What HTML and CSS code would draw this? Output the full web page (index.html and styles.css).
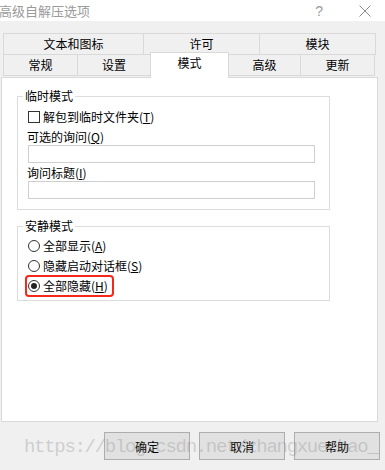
FILE: index.html
```html
<!DOCTYPE html>
<html lang="zh-CN">
<head>
  <meta charset="UTF-8" />
  <title>高级自解压选项</title>
  <link rel="stylesheet" href="styles.css">
</head>
<body>

  <div class="titlebar">
    <div class="title">高级自解压选项</div>
    <div class="title-help">?</div>
    <svg class="title-close" width="14" height="12" viewBox="0 0 14 12">
      <path d="M1.5 0.5 L12.5 11.5 M12.5 0.5 L1.5 11.5" stroke="#8a8a8a" stroke-width="1" fill="none"/>
    </svg>
  </div>

  <div class="tabs">
    <div class="tab-row">
      <div class="tab" style="width: 141px;">文本和图标</div>
      <div class="tab" style="width: 117px;">许可</div>
      <div class="tab" style="width: 117px;">模块</div>
    </div>
    <div class="tab-row">
      <div class="tab" style="width: 75px;">常规</div>
      <div class="tab" style="width: 74px;">设置</div>
      <div class="tab active" style="width: 79px;">模式</div>
      <div class="tab" style="width: 73px;">高级</div>
      <div class="tab" style="width: 75px;">更新</div>
    </div>
  </div>

  <div class="panel">
    <fieldset class="group">
      <legend>临时模式</legend>
      <div class="row check-row">
        <span class="checkbox"></span>
        <span>解包到临时文件夹(<u>T</u>)</span>
      </div>
      <div class="row field-label">可选的询问(<u>Q</u>)</div>
      <div class="field"></div>
      <div class="row field-label second">询问标题(<u>I</u>)</div>
      <div class="field"></div>
    </fieldset>

    <fieldset class="group quiet">
      <legend>安静模式</legend>
      <div class="row radio-row">
        <span class="radio"></span>
        <span>全部显示(<u>A</u>)</span>
      </div>
      <div class="row radio-row">
        <span class="radio"></span>
        <span>隐藏启动对话框(<u>S</u>)</span>
      </div>
      <div class="row radio-row marked">
        <span class="radio checked"></span>
        <span>全部隐藏(<u>H</u>)</span>
      </div>
    </fieldset>
  </div>

  <div class="buttons">
    <button>确定</button>
    <button>取消</button>
    <button>帮助</button>
  </div>

  <div class="watermark">https://blog.csdn.net/zhangxuechao_</div>

</body>
</html>
```

FILE: styles.css
```css
* {
  box-sizing: border-box;
}

body {
  margin: 0;
  width: 385px;
  height: 470px;
  overflow: hidden;
  position: relative;
  background: #f0f0f0;
  font-family: "Noto Sans CJK SC", "Noto Sans", sans-serif;
  font-size: 12px;
  color: #000;
}

u {
  text-decoration: underline;
  text-underline-offset: 1px;
}

/* title bar */
.titlebar {
  height: 21px;
  background: #fff;
  display: flex;
  align-items: center;
}

.title {
  font-size: 13px;
  color: #9a9a9a;
  margin-left: -1px;
  flex: 1;
}

.title-help {
  font-size: 14px;
  color: #9a9a9a;
  font-family: "Liberation Sans", sans-serif;
  margin-right: 35px;
}

.title-close {
  margin-right: 13px;
}

/* tabs */
.tabs {
  margin: 12px 0 0 3px;
  width: 373px;
}

.tab-row {
  display: flex;
  height: 22px;
}

.tab {
  height: 22px;
  border: 1px solid #d9d9d9;
  margin-left: -1px;
  margin-top: -1px;
  background: #f0f0f0;
  display: flex;
  align-items: center;
  justify-content: center;
  line-height: 14px;
}

.tab-row:first-child .tab {
  margin-top: 0;
}

.tab-row .tab:first-child {
  margin-left: 0;
}

.tab.active {
  position: relative;
  z-index: 1;
  background: #fff;
  height: 26px;
  margin-top: -3px;
  border-bottom: none;
  align-items: flex-start;
  padding-top: 3px;
}

/* panel */
.panel {
  margin-left: 1px;
  width: 377px;
  height: 345px;
  background: #fff;
  border: 1px solid #d9d9d9;
  padding: 11px 0 0 15px;
}

.group {
  margin: 0;
  width: 313px;
  border: 1px solid #dcdcdc;
  padding: 0 0 10px 5px;
}

.group legend {
  padding: 0 2px;
  line-height: 14px;
  height: 14px;
}

.row {
  height: 16px;
  display: flex;
  align-items: center;
  line-height: 14px;
  padding-left: 5px;
}

.check-row {
  margin-top: 6px;
  gap: 3px;
}

.checkbox {
  width: 12px;
  height: 12px;
  border: 1px solid #333;
  background: #fff;
}

.field-label {
  margin-top: 4px;
  padding-left: 4px;
}

.field-label.second {
  margin-top: 2px;
}

.field {
  margin-left: 5px;
  width: 287px;
  height: 18px;
  border: 1px solid #cfcfcf;
}

.group.quiet {
  margin-top: 9px;
  padding-bottom: 6px;
}

.radio-row {
  margin-top: 4px;
  gap: 3px;
}

.radio-row:first-of-type {
  margin-top: 5px;
}

.radio {
  width: 12px;
  height: 12px;
  border: 1px solid #333;
  border-radius: 50%;
  background: #fff;
  display: flex;
  align-items: center;
  justify-content: center;
}

.radio.checked::after {
  content: "";
  width: 6px;
  height: 6px;
  border-radius: 50%;
  background: #222;
}

.radio-row.marked {
  width: 83px;
  margin-left: 5px;
  padding-left: 0;
  outline: 2px solid #f5281c;
  outline-offset: 1px;
  border-radius: 1px;
}

/* buttons */
.buttons {
  display: flex;
  gap: 9px;
  margin: 10px 0 0 104px;
}

.buttons button {
  width: 86px;
  height: 28px;
  background: #e1e1e1;
  border: 1px solid #adadad;
  font-family: "Noto Sans CJK SC", sans-serif;
  font-size: 12px;
  color: #000;
  padding: 0;
}

.watermark {
  position: absolute;
  left: 24px;
  top: 436px;
  font-family: "Liberation Mono", monospace;
  font-size: 19px;
  letter-spacing: -1.3px;
  color: rgba(140, 140, 140, 0.35);
  white-space: nowrap;
  pointer-events: none;
}
```
